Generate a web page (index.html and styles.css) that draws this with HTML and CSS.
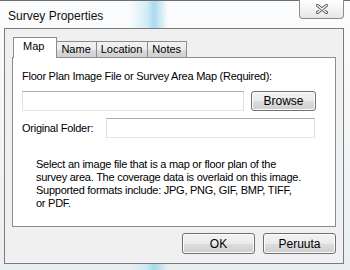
FILE: index.html
```html
<!DOCTYPE html>
<html lang="en">
<head>
    <meta charset="UTF-8">
    <title>Survey Properties</title>
    <link rel="stylesheet" href="styles.css">
</head>
<body>
    <div class="window">
        <div class="titlebar">
            <span class="title">Survey Properties</span>
            <button class="close-btn">
                <svg width="14" height="10" viewBox="0 0 14 10">
                    <path d="M2.5 1.5L11.5 8.5M11.5 1.5L2.5 8.5" stroke="#5a5a5a" stroke-width="3" stroke-linecap="round" />
                    <path d="M2.5 1.5L11.5 8.5M11.5 1.5L2.5 8.5" stroke="#ffffff" stroke-width="1.2" stroke-linecap="round" />
                </svg>
            </button>
        </div>

        <div class="client">
            <div class="tabs">
                <div class="tab active">Map</div>
                <div class="tab">Name</div>
                <div class="tab">Location</div>
                <div class="tab">Notes</div>
            </div>

            <div class="panel">
                <div class="field-label">Floor Plan Image File or Survey Area Map (Required):</div>
                <div class="row">
                    <div class="textbox wide"></div>
                    <button class="btn browse">Browse</button>
                </div>
                <div class="row folder-row">
                    <span class="row-label">Original Folder:</span>
                    <div class="textbox folder"></div>
                </div>
                <p class="hint">
                    Select an image file that is a map or floor plan of the<br>
                    survey area. The coverage data is overlaid on this image.<br>
                    Supported formats include: JPG, PNG, GIF, BMP, TIFF,<br>
                    or PDF.
                </p>
            </div>

            <div class="actions">
                <button class="btn action">OK</button>
                <button class="btn action">Peruuta</button>
            </div>
        </div>
    </div>
</body>
</html>
```

FILE: styles.css
```css
body {
    margin: 0;
    font-family: "Liberation Sans", Arial, sans-serif;
    font-size: 11px;
    color: #000;
}

.window {
    width: 350px;
    height: 270px;
    box-sizing: border-box;
    border-top: 1px solid #6e6e6e;
    background:
        linear-gradient(90deg, rgba(255,255,255,0) 37%, rgba(190,230,245,0.7) 42%, rgba(150,210,235,0.8) 44%, rgba(255,255,255,0) 48%),
        linear-gradient(180deg, #fbfcfd 0%, #f1f4f6 60%, #e9eef1 100%);
    display: flex;
    flex-direction: column;
}

.titlebar {
    height: 27px;
    display: flex;
    align-items: flex-start;
}

.title {
    font-size: 12px;
    margin: 8px 0 0 8px;
    color: #111;
}

.close-btn {
    margin-left: auto;
    margin-right: 6px;
    margin-top: -1px;
    width: 45px;
    height: 19px;
    padding: 0;
    border: 1px solid #8c8c8c;
    border-top: none;
    border-radius: 0 0 4px 4px;
    background: linear-gradient(180deg, #ffffff 0%, #f4f4f4 50%, #e6e6e6 100%);
    display: flex;
    align-items: center;
    justify-content: center;
}

.client {
    margin: 0 6px 0 4px;
    height: 236px;
    box-sizing: border-box;
    background: #f0f0f0;
    border: 1px solid #7a7a7a;
    padding: 8px 7px 0 7px;
}

.tabs {
    display: flex;
    align-items: flex-end;
    height: 20px;
    padding-left: 1px;
}

.tab {
    height: 15px;
    line-height: 15px;
    padding: 0 5px 0 4px;
    border: 1px solid #898c95;
    border-bottom: none;
    border-left: none;
    background: linear-gradient(180deg, #f2f2f2 0%, #ebebeb 50%, #dddddd 51%, #cfcfcf 100%);
}

.tab.active {
    height: 20px;
    line-height: 17px;
    padding: 0 12px 0 9px;
    border-left: 1px solid #898c95;
    background: #ffffff;
    position: relative;
    z-index: 1;
    margin-bottom: -1px;
}

.panel {
    width: 324px;
    height: 170px;
    box-sizing: border-box;
    background: #ffffff;
    border: 1px solid #898c95;
    padding: 12px 0 0 9px;
    letter-spacing: -0.25px;
}

.field-label {
    line-height: 13px;
}

.row {
    display: flex;
    align-items: center;
    margin-top: 8px;
}

.folder-row {
    margin-top: 7px;
}

.row-label {
    width: 84px;
}

.textbox {
    height: 20px;
    box-sizing: border-box;
    border: 1px solid #dbdfe6;
    border-top-color: #abadb3;
    border-bottom-color: #e3e9ef;
    background: #fff;
}

.textbox.wide {
    width: 222px;
}

.textbox.folder {
    width: 209px;
}

.btn {
    font-family: "Liberation Sans", Arial, sans-serif;
    font-size: 12px;
    letter-spacing: 0;
    height: 20px;
    padding: 0;
    border: 1px solid #707070;
    border-radius: 3px;
    background: linear-gradient(180deg, #f2f2f2 0%, #ebebeb 50%, #dddddd 51%, #cfcfcf 100%);
    box-shadow: inset 0 0 0 1px #fcfcfc;
    color: #000;
}

.browse {
    width: 65px;
    margin-left: 7px;
}

.hint {
    margin: 20px 0 0 14px;
    width: 298px;
    line-height: 13px;
    white-space: nowrap;
}

.actions {
    display: flex;
    justify-content: flex-end;
    gap: 8px;
    margin-top: 6px;
}

.action {
    width: 73px;
    height: 21px;
}
```
